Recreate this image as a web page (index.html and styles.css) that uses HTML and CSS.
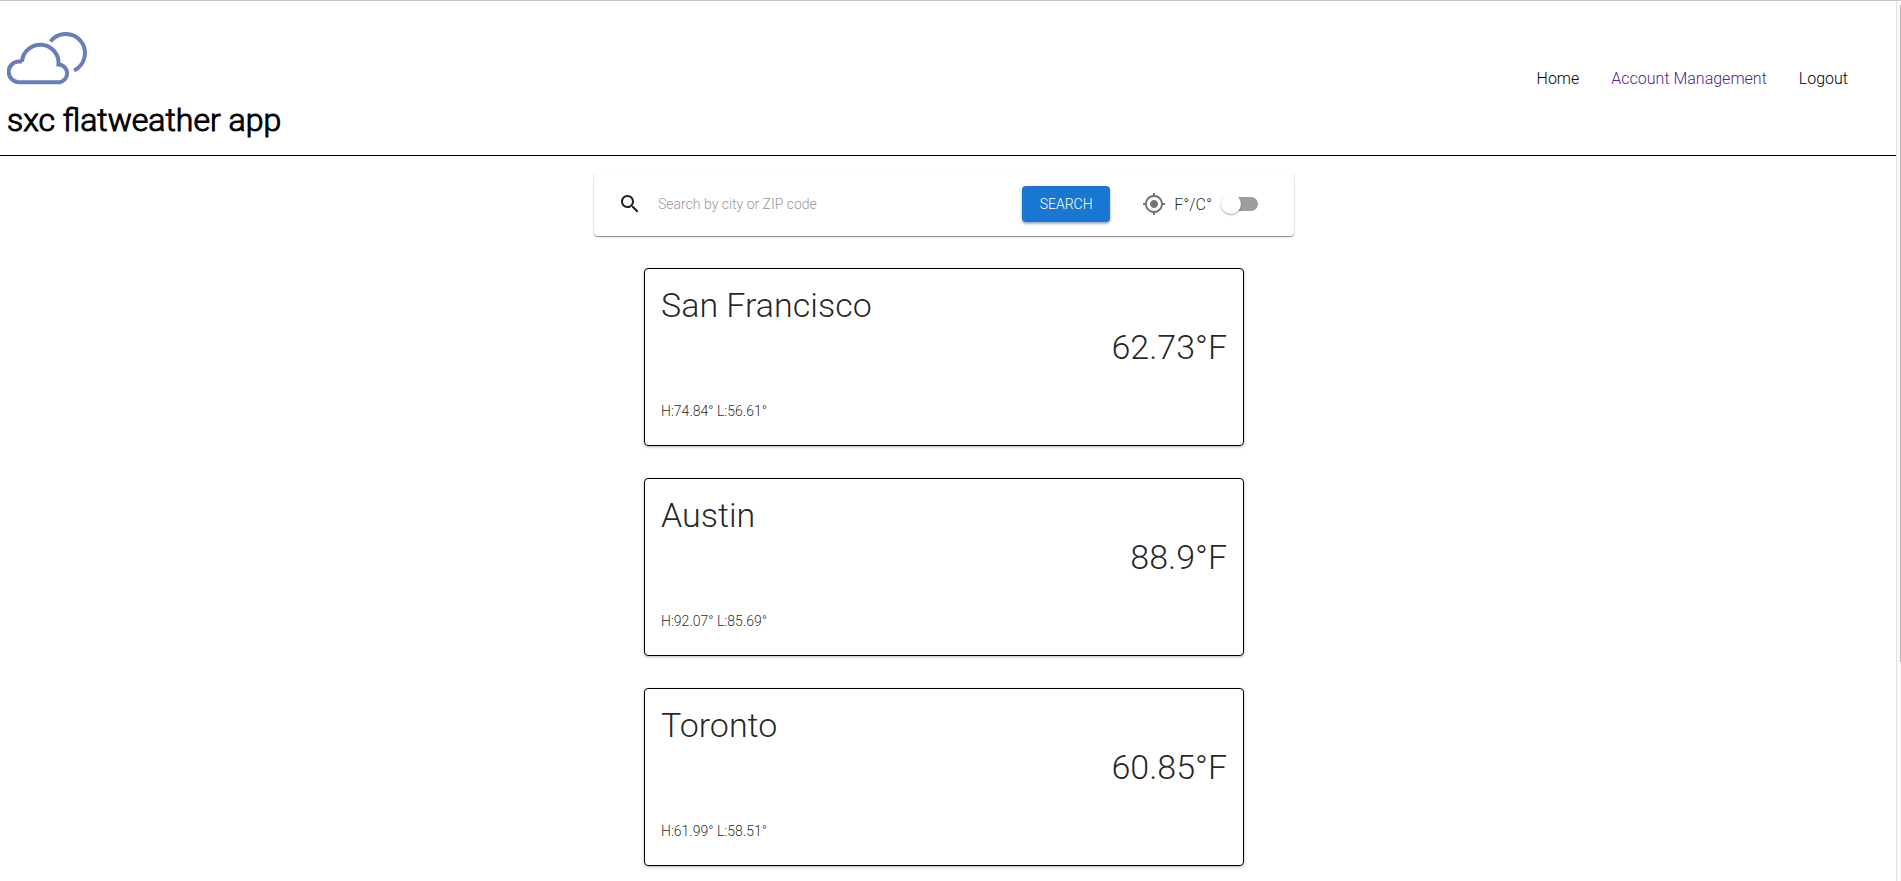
FILE: index.html
```html
<!DOCTYPE html>
<html lang="en">
<head>
<meta charset="utf-8">
<title>sxc flatweather app</title>
<link rel="stylesheet" href="styles.css">
</head>
<body>
<div class="page">
  <header class="header">
    <div class="brand">
      <svg class="logo" viewBox="0 0 81 53" aria-hidden="true">
        <path d="M15 29.5H12A10.3 10.3 0 0 0 12 50.2H52.5A8.9 8.9 0 0 0 51.5 32.5A18.2 18.2 0 0 0 15 29.5"/>
        <path d="M43.5 9.5A19.2 19.2 0 1 1 67 38.5"/>
      </svg>
      <h1 class="title">sxc flatweather app</h1>
    </div>
    <nav class="nav">
      <a class="link" href="#home">Home</a>
      <a class="link visited" href="#account">Account Management</a>
      <a class="link" href="#logout">Logout</a>
    </nav>
  </header>
  <main class="main">
    <form class="search">
      <svg class="icon glass" viewBox="0 0 24 24" aria-hidden="true"><path d="M15.5 14h-.79l-.28-.27C15.41 12.59 16 11.11 16 9.5 16 5.91 13.09 3 9.5 3S3 5.91 3 9.5 5.91 16 9.5 16c1.61 0 3.09-.59 4.23-1.57l.27.28v.79l5 4.99L20.49 19l-4.99-5zm-6 0C7.01 14 5 11.99 5 9.5S7.01 5 9.5 5 14 7.01 14 9.5 11.99 14 9.5 14z"/></svg>
      <input class="field" type="text" placeholder="Search by city or ZIP code" aria-label="Search by city or ZIP code">
      <button class="submit" type="button">SEARCH</button>
      <button class="locate" type="button" aria-label="Use my location">
        <svg class="icon" viewBox="0 0 24 24" aria-hidden="true"><path d="M12 8c-2.21 0-4 1.79-4 4s1.79 4 4 4 4-1.79 4-4-1.79-4-4-4zm8.94 3c-.46-4.17-3.77-7.48-7.94-7.94V1h-2v2.06C6.83 3.52 3.52 6.83 3.06 11H1v2h2.06c.46 4.17 3.77 7.48 7.94 7.94V23h2v-2.06c4.17-.46 7.48-3.77 7.94-7.94H23v-2h-2.06zM12 19c-3.87 0-7-3.13-7-7s3.13-7 7-7 7 3.13 7 7-3.13 7-7 7z"/></svg>
      </button>
      <label class="unit" for="unit">F°/C°</label>
      <input class="switch" id="unit" type="checkbox">
    </form>
    <section class="card">
      <h2 class="city">San Francisco</h2>
      <p class="temp">62.73°F</p>
      <p class="range">H:74.84° L:56.61°</p>
    </section>
    <section class="card">
      <h2 class="city">Austin</h2>
      <p class="temp">88.9°F</p>
      <p class="range">H:92.07° L:85.69°</p>
    </section>
    <section class="card">
      <h2 class="city">Toronto</h2>
      <p class="temp">60.85°F</p>
      <p class="range">H:61.99° L:58.51°</p>
    </section>
  </main>
</div>
<div class="track"><div class="thumb"></div></div>
</body>
</html>
```
FILE: styles.css
```css
* { box-sizing: border-box; }
body {
  margin: 0;
  display: flex;
  height: 100vh;
  overflow: hidden;
  border-top: 1px solid #c8c8c8;
  background: #fff;
  color: rgba(0, 0, 0, 0.87);
  font-family: Roboto, "Liberation Sans", sans-serif;
  font-weight: 300;
}
.page { flex: 1; min-width: 0; }
.track { width: 5px; padding-top: 4px; border-left: 1px solid #e0e0e0; background: #fafafa; }
.thumb { width: 1px; height: 75%; margin-left: auto; background: #b8b8b8; }
.header {
  display: flex;
  justify-content: space-between;
  padding: 31px 48px 16px 7px;
  border-bottom: 1px solid #000;
}
.logo { display: block; width: 81px; height: 53px; fill: none; stroke: #687eb9; stroke-width: 4; }
.title { margin: 16px 0 0; color: #000; font-size: 32px; font-weight: 300; line-height: 38px; -webkit-text-stroke: 1px #000; }
.nav { display: flex; gap: 32px; padding-top: 35px; }
.link { color: #000; font-size: 16px; line-height: 24px; text-decoration: none; }
.visited { color: #551a8b; }
.main { display: flex; flex-direction: column; align-items: center; gap: 32px; padding: 16px 8px 0 0; }
.search {
  display: flex;
  align-items: center;
  width: 100%;
  max-width: 700px;
  height: 64px;
  padding: 0 36px 0 24px;
  border-radius: 4px;
  box-shadow: 0 1px 1px rgba(0, 0, 0, 0.4), 0 1px 3px rgba(0, 0, 0, 0.12);
}
.icon { display: block; width: 24px; height: 24px; fill: currentColor; }
.field { flex: 1; min-width: 0; margin: 0 16px; padding: 0; border: 0; outline: 0; font: inherit; font-size: 14px; line-height: 24px; }
.field::placeholder { color: #999; opacity: 1; }
.submit {
  width: 88px;
  height: 36px;
  padding: 0;
  border: 0;
  border-radius: 4px;
  background: #1976d2;
  color: #fff;
  font: inherit;
  font-size: 14px;
  box-shadow: 0 2px 2px rgba(0, 0, 0, 0.24), 0 1px 4px rgba(0, 0, 0, 0.14);
}
.locate { margin: 0 8px 0 32px; padding: 0; border: 0; background: none; color: #757575; }
.unit { font-size: 16px; }
.switch {
  appearance: none;
  position: relative;
  width: 34px;
  height: 14px;
  margin: 0 0 0 12px;
  border-radius: 7px;
  background: #9e9e9e;
}
.switch::before {
  content: "";
  position: absolute;
  top: -3px;
  left: -3px;
  width: 20px;
  height: 20px;
  border-radius: 50%;
  background: #fff;
  box-shadow: 0 1px 2px rgba(0, 0, 0, 0.35);
}
.card {
  width: 100%;
  max-width: 600px;
  padding: 16px 16px 24px;
  border: 1px solid #000;
  border-radius: 4px;
  box-shadow: 0 1px 3px rgba(0, 0, 0, 0.3);
}
.city, .temp { margin: 0; font-size: 34px; font-weight: 300; }
.city { line-height: 40px; }
.temp { line-height: 44px; text-align: right; }
.range { margin: 32px 0 0; color: rgba(0, 0, 0, 0.87); font-size: 14px; line-height: 20px; }
```
